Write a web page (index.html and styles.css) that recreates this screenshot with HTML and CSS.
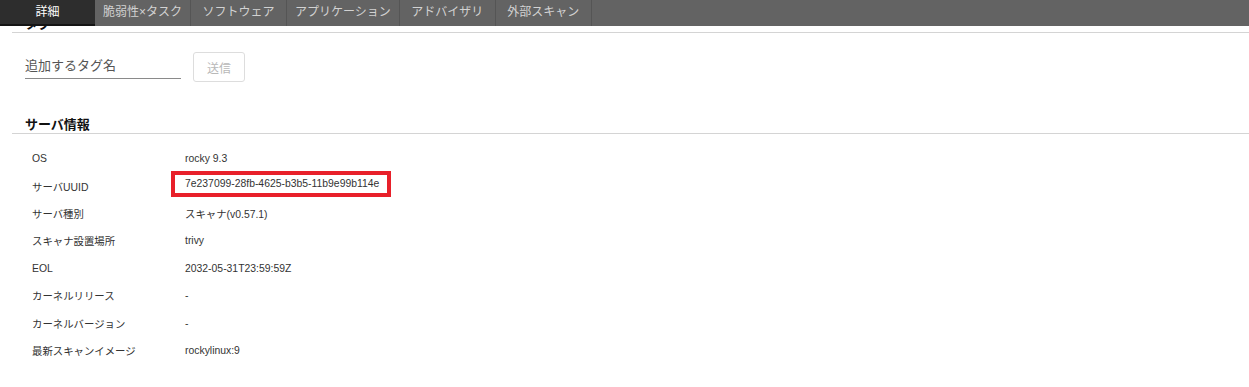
FILE: index.html
```html
<!DOCTYPE html>
<html lang="ja">
<head>
<meta charset="utf-8">
<title>詳細</title>
<link rel="stylesheet" href="styles.css">
</head>
<body>
<nav class="tabs">
  <a class="tab active">詳細</a>
  <a class="tab">脆弱性×タスク</a>
  <a class="tab">ソフトウェア</a>
  <a class="tab">アプリケーション</a>
  <a class="tab">アドバイザリ</a>
  <a class="tab">外部スキャン</a>
</nav>
<main class="content">
  <section class="section">
    <h3 class="section-title">タグ</h3>
    <div class="tag-form">
      <input class="tag-input" type="text" placeholder="追加するタグ名">
      <button class="tag-submit" type="button">送信</button>
    </div>
  </section>
  <section class="section">
    <h3 class="section-title title-server">サーバ情報</h3>
    <div class="info">
      <div class="label">OS</div><div class="value">rocky 9.3</div>
      <div class="label">サーバUUID</div><div class="value"><span class="highlight">7e237099-28fb-4625-b3b5-11b9e99b114e</span></div>
      <div class="label">サーバ種別</div><div class="value">スキャナ(v0.57.1)</div>
      <div class="label">スキャナ設置場所</div><div class="value">trivy</div>
      <div class="label">EOL</div><div class="value">2032-05-31T23:59:59Z</div>
      <div class="label">カーネルリリース</div><div class="value">-</div>
      <div class="label">カーネルバージョン</div><div class="value">-</div>
      <div class="label">最新スキャンイメージ</div><div class="value">rockylinux:9</div>
    </div>
  </section>
</main>
</body>
</html>
```
FILE: styles.css
```css
html, body {
  margin: 0;
  padding: 0;
  background: #ffffff;
}
body {
  font-family: "Liberation Sans", Arial, "Noto Sans CJK JP", sans-serif;
  color: #333333;
}

.tabs {
  position: fixed;
  top: 0;
  left: 0;
  right: 0;
  height: 26px;
  display: flex;
  background: #636363;
  z-index: 10;
}
.tab {
  box-sizing: border-box;
  min-width: 96px;
  padding: 0 8px;
  height: 26px;
  line-height: 25px;
  text-align: center;
  font-size: 12px;
  color: #d2d2d2;
  border-right: 1px solid #555555;
  white-space: nowrap;
}
.tab.active {
  min-width: 95px;
  background: #2d2d2d;
  color: #ffffff;
  border-right: none;
  border-bottom: 2px solid #141414;
  line-height: 24px;
}

.content {
  padding: 15px 0 0 12px;
}
.section-title {
  margin: 0;
  padding: 0 0 0 13px;
  font-size: 13px;
  line-height: 17px;
  font-weight: bold;
  color: #111111;
  border-bottom: 1px solid #d4d4d4;
}
.title-server {
  margin-top: 34px;
}

.tag-form {
  display: flex;
  align-items: flex-start;
  margin: 19px 0 0 13px;
}
.tag-input {
  box-sizing: border-box;
  width: 156px;
  height: 27px;
  padding: 0;
  border: none;
  border-bottom: 1px solid #8a8a8a;
  font-family: inherit;
  font-size: 13px;
  color: #555555;
  outline: none;
  background: transparent;
}
.tag-input::placeholder {
  color: #555555;
}
.tag-submit {
  box-sizing: border-box;
  width: 52px;
  height: 30px;
  margin-left: 12px;
  padding: 0;
  border: 1px solid #dddddd;
  border-radius: 3px;
  background: #ffffff;
  font-family: inherit;
  font-size: 12px;
  color: #b8b8b8;
}

.info {
  display: grid;
  grid-template-columns: 153px 1fr;
  grid-auto-rows: 27.4px;
  margin: 11px 0 0 20px;
  font-size: 10.4px;
  color: #333333;
}
.label, .value {
  display: flex;
  align-items: center;
  white-space: nowrap;
}
.highlight {
  display: inline-block;
  margin: 0 0 5px -10px;
  padding: 0 8px 0 10px;
  line-height: 18px;
  outline: 4px solid #e8202a;
}
```
